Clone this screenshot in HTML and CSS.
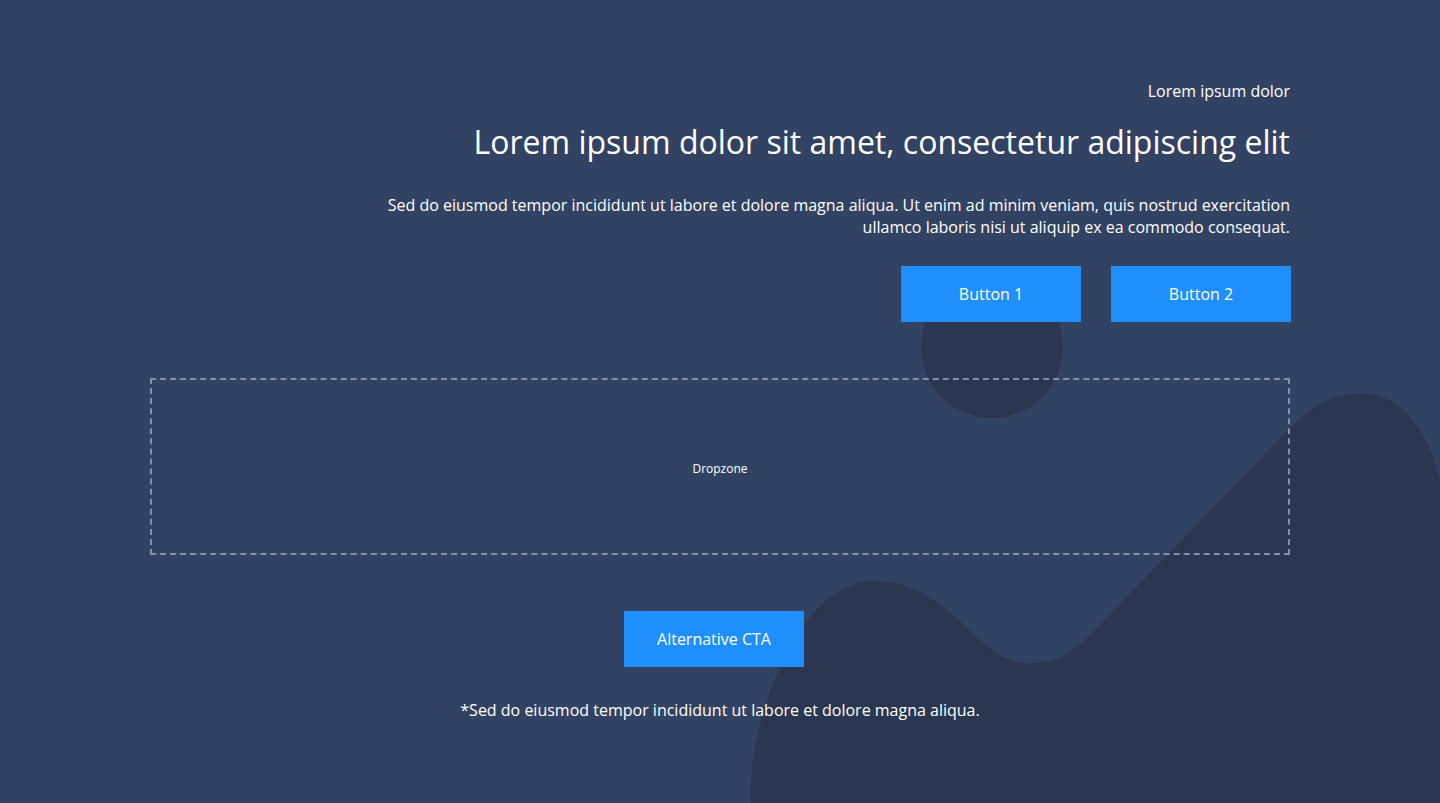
FILE: index.html
```html
<!DOCTYPE html>
<html lang="en">
<head>
    <meta charset="UTF-8">
    <meta name="viewport" content="width=device-width, initial-scale=1.0">
    <title>Lorem ipsum</title>
    <link rel="stylesheet" href="styles.css">
</head>
<body>
    <svg class="decor" width="1440" height="803" viewBox="0 0 1440 803" aria-hidden="true">
        <circle cx="992" cy="347" r="71" />
        <path d="M 751 803 C 748 745 770 680 795 640 C 815 605 842 581 875 581 C 920 581 955 615 985 645 C 1005 660 1020 665 1035 663 C 1055 662 1070 655 1090 635 L 1290 428 C 1310 408 1335 393 1360 393 C 1395 393 1425 420 1440 480 L 1440 803 Z" />
    </svg>

    <div class="container">
        <section class="hero">
            <p class="eyebrow">Lorem ipsum dolor</p>
            <h1>Lorem ipsum dolor sit amet, consectetur adipiscing elit</h1>
            <p class="lead">Sed do eiusmod tempor incididunt ut labore et dolore magna aliqua. Ut enim ad minim veniam, quis nostrud exercitation ullamco laboris nisi ut aliquip ex ea commodo consequat.</p>
            <div class="actions">
                <button class="btn">Button 1</button>
                <button class="btn">Button 2</button>
            </div>
        </section>

        <div class="dropzone">Dropzone</div>

        <div class="cta-row">
            <button class="btn">Alternative CTA</button>
        </div>
        <p class="note">*Sed do eiusmod tempor incididunt ut labore et dolore magna aliqua.</p>
    </div>
</body>
</html>
```

FILE: styles.css
```css
html, body {
    height: 100%;
}
body {
    margin: 0;
    background: #324263;
    color: #fff;
    font-family: "Open Sans", "Noto Sans", sans-serif;
    overflow: hidden;
    position: relative;
}
.decor {
    position: absolute;
    top: 0;
    left: 0;
    fill: #2b3750;
}
.container {
    position: relative;
    width: 1140px;
    margin: 0 auto;
    padding-top: 80px;
}
.hero {
    text-align: right;
}
.eyebrow {
    margin: 0;
    font-size: 16px;
    line-height: 22px;
}
h1 {
    margin: 18px 0 0;
    font-size: 32px;
    font-weight: 400;
    line-height: 44px;
}
.lead {
    max-width: 910px;
    margin: 30px 0 0 auto;
    font-size: 16px;
    line-height: 22px;
}
.actions {
    display: flex;
    justify-content: flex-end;
    gap: 30px;
    margin-top: 28px;
    margin-right: -1px;
}
.btn {
    width: 180px;
    height: 56px;
    border: none;
    background: #1f8ffb;
    color: #fff;
    font-family: inherit;
    font-size: 16px;
    cursor: pointer;
}
.dropzone {
    margin-top: 56px;
    padding-top: 3px;
    height: 170px;
    border: 2px dashed #8490a7;
    display: flex;
    align-items: center;
    justify-content: center;
    font-size: 12px;
}
.cta-row {
    display: flex;
    justify-content: center;
    margin-top: 56px;
    padding-right: 12px;
}
.note {
    margin: 32px 0 0;
    text-align: center;
    font-size: 16px;
    line-height: 22px;
}
```
